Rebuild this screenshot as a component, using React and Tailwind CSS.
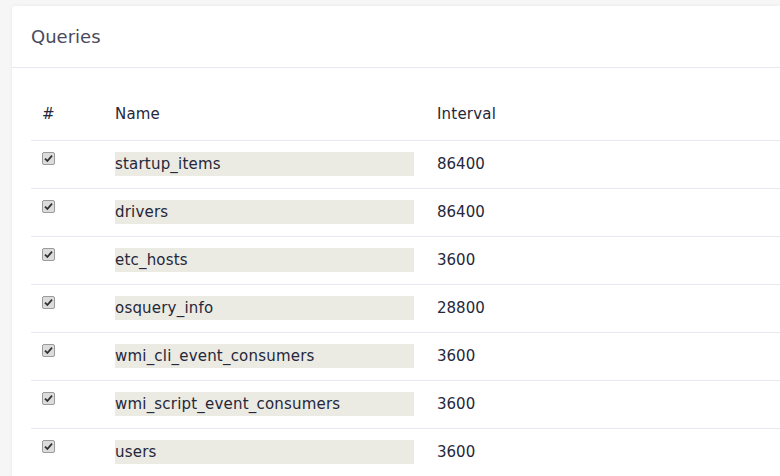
import React from "react";

const queries = [
  { name: "startup_items", interval: 86400 },
  { name: "drivers", interval: 86400 },
  { name: "etc_hosts", interval: 3600 },
  { name: "osquery_info", interval: 28800 },
  { name: "wmi_cli_event_consumers", interval: 3600 },
  { name: "wmi_script_event_consumers", interval: 3600 },
  { name: "users", interval: 3600 },
];

const CheckBox = () => (
  <span className="flex items-center justify-center w-[13px] h-[13px] rounded-[2px] border border-[#9a9a9a] bg-[#dcdcdc]">
    <svg width="9" height="9" viewBox="0 0 9 9">
      <path d="M1 4.6 L3.4 7 L8 1.6" fill="none" stroke="#333" strokeWidth="1.8" />
    </svg>
  </span>
);

export default function App() {
  return (
    <div
      className="min-h-screen bg-[#f6f6f6] pl-[12px] pt-[6px] overflow-hidden"
      style={{ fontFamily: "'DejaVu Sans', 'Open Sans', sans-serif" }}
    >
      <div className="bg-white shadow-[0_0_4px_rgba(0,0,0,0.06)] rounded-tl-[3px] min-h-[470px]">
        <div className="h-[62px] flex items-center px-[19px] border-b border-[#e8e8f0]">
          <h2 className="text-[18px] text-[#4a4a5c]">Queries</h2>
        </div>

        <div className="pl-[19px] pt-[20px]">
          <table className="w-full border-collapse text-[15px] tracking-[0.2px] text-[#25273a]">
            <thead>
              <tr className="h-[52px] border-b border-[#e8e8f0]">
                <th className="w-[73px] pl-[11px] text-left font-medium">#</th>
                <th className="w-[322px] pl-[11px] text-left font-medium">Name</th>
                <th className="pl-[11px] text-left font-medium">Interval</th>
              </tr>
            </thead>
            <tbody>
              {queries.map((q) => (
                <tr key={q.name} className="h-[48px] border-b border-[#e8e8f0]">
                  <td className="pl-[11px] align-top pt-[11px]">
                    <CheckBox />
                  </td>
                  <td className="pl-[11px]">
                    <div className="w-[299px] h-[24px] bg-[#ebeae3] flex items-center">
                      {q.name}
                    </div>
                  </td>
                  <td className="pl-[11px] tracking-normal">{q.interval}</td>
                </tr>
              ))}
            </tbody>
          </table>
        </div>
      </div>
    </div>
  );
}
